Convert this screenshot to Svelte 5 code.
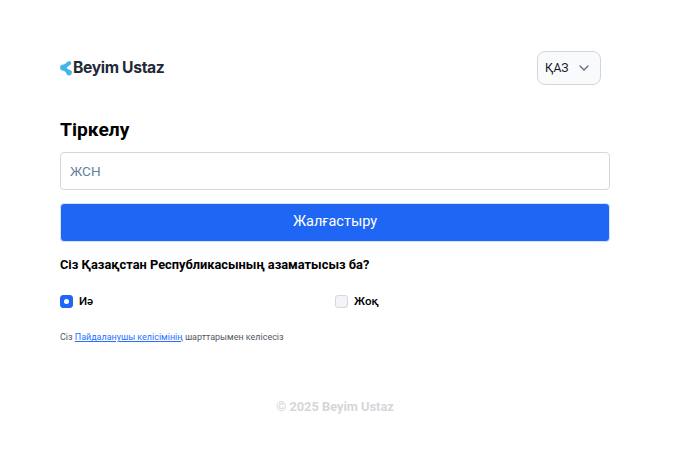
<script>
  const brand = 'Beyim Ustaz';
</script>

<div class="page">
  <header class="top">
    <div class="logo">
      <svg width="12" height="16" viewBox="0 0 12 16" aria-hidden="true">
        <path d="M9.2 3.2 L3.2 7.6 L9 12.6" fill="none" stroke="#45b5e8" stroke-width="4" stroke-linecap="round" stroke-linejoin="round"/>
        <circle cx="3.2" cy="7.6" r="3.1" fill="#45b5e8"/>
        <circle cx="9" cy="12.6" r="2.8" fill="#45b5e8"/>
      </svg>
      <span>{brand}</span>
    </div>
    <button class="lang">
      <span>ҚАЗ</span>
      <svg width="10" height="6" viewBox="0 0 10 6" aria-hidden="true"><path d="M1 1l4 4 4-4" fill="none" stroke="#667085" stroke-width="1.4" stroke-linecap="round" stroke-linejoin="round"/></svg>
    </button>
  </header>

  <main class="form">
    <h1>Тіркелу</h1>
    <input class="field" placeholder="ЖСН" />
    <button class="submit">Жалғастыру</button>
    <p class="question">Сіз Қазақстан Республикасының азаматысыз ба?</p>
    <div class="choices">
      <label class="choice"><span class="box on"><span class="dot"></span></span>Иә</label>
      <label class="choice"><span class="box"></span>Жоқ</label>
    </div>
    <p class="terms">Сіз <a href="#terms">Пайдаланушы келісімінің</a> шарттарымен келісесіз</p>
    <footer class="foot">© 2025 {brand}</footer>
  </main>
</div>

<style>
  :global(body) { margin: 0; background: #fff; }
  .page {
    width: 677px;
    height: 460px;
    box-sizing: border-box;
    padding: 51px 67px 0 60px;
    font-family: Roboto, "Noto Sans", sans-serif;
    color: #000;
    overflow: hidden;
  }
  .top {
    display: flex;
    justify-content: space-between;
    align-items: center;
    height: 34px;
    padding-right: 9px;
  }
  .logo {
    display: flex;
    align-items: center;
    gap: 1px;
    font-family: Inter, sans-serif;
    font-weight: 700;
    font-size: 15.7px;
    letter-spacing: -0.35px;
    color: #1f2a37;
  }
  .logo span { margin-top: -1px; }
  .lang {
    display: flex;
    align-items: center;
    justify-content: space-between;
    box-sizing: border-box;
    width: 64px;
    height: 34px;
    padding: 0 11px 0 7px;
    background: #f9fafb;
    border: 1px solid #d0d5dd;
    border-radius: 8px;
    font-family: Roboto, sans-serif;
    font-size: 12px;
    color: #101828;
  }
  .form { display: flex; flex-direction: column; }
  h1 {
    margin: 33px 0 0;
    font-size: 19.2px;
    line-height: 24px;
    font-weight: 700;
  }
  .field {
    box-sizing: border-box;
    width: 550px;
    height: 38px;
    margin-top: 10px;
    padding: 0 9px;
    border: 1px solid #d5d7da;
    border-radius: 4px;
    font-family: Roboto, sans-serif;
    font-size: 13.5px;
    outline: none;
  }
  .field::placeholder { color: #667f9b; opacity: 1; }
  .submit {
    width: 550px;
    height: 39px;
    margin-top: 13px;
    padding: 0 0 2px;
    border: 1px solid #d5e2fb;
    border-radius: 4px;
    background: #1f66f4;
    color: #fff;
    font-family: Roboto, sans-serif;
    font-size: 14.5px;
  }
  .question {
    margin: 15px 0 0;
    font-size: 12.8px;
    line-height: 16px;
    font-weight: 700;
  }
  .choices {
    display: grid;
    grid-template-columns: 275px 275px;
    margin-top: 20px;
  }
  .choice {
    display: flex;
    align-items: center;
    gap: 6px;
    height: 16px;
    font-size: 11.5px;
    font-weight: 500;
  }
  .box {
    display: flex;
    align-items: center;
    justify-content: center;
    box-sizing: border-box;
    width: 13px;
    height: 13px;
    border: 1px solid #d5d7da;
    border-radius: 3px;
    background: #f2f4f7;
  }
  .box.on { background: #1f66f4; border-color: #1f66f4; }
  .dot { width: 5px; height: 5px; border-radius: 50%; background: #fff; }
  .terms {
    margin: 22px 0 0;
    font-size: 8.96px;
    line-height: 12px;
    color: #535862;
  }
  .terms a { color: #2970ff; text-decoration: underline; }
  .foot {
    margin-top: 57px;
    text-align: center;
    font-size: 12.8px;
    font-weight: 700;
    line-height: 14px;
    color: #d5d7da;
  }
</style>
